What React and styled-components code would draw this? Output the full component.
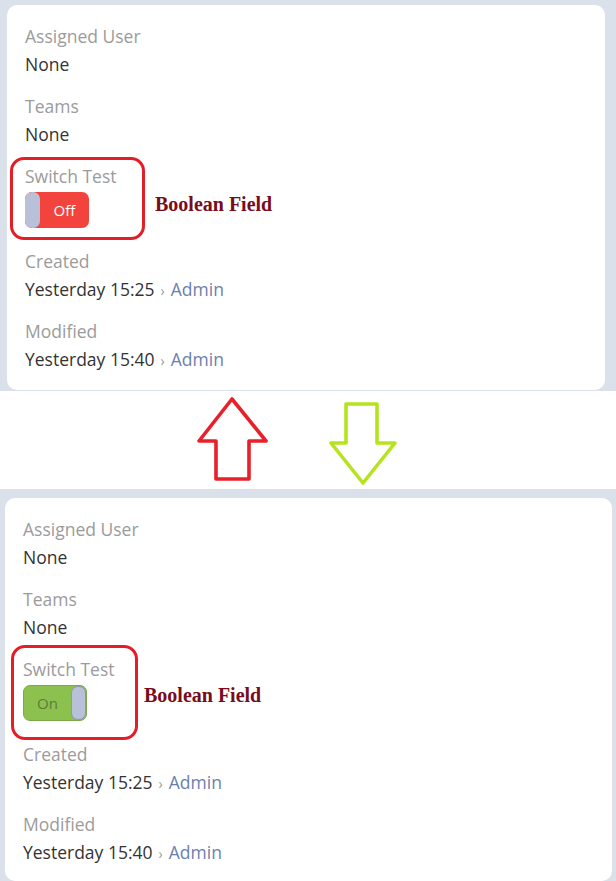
import styled, { createGlobalStyle } from "styled-components";

const GlobalStyle = createGlobalStyle`
  body {
    margin: 0;
    background: #fff;
    font-family: "Open Sans", "Liberation Sans", sans-serif;
  }
`;

// Styled Components

const Shot = styled.section`
  background: #dae1eb;
  padding: ${(p) => p.$pad};
`;

const Card = styled.div`
  background: #fff;
  border-radius: 10px;
  padding: 17px 18px ${(p) => p.$bottom}px;
`;

const Field = styled.div`
  position: relative;
  margin-bottom: 14px;

  &:last-child {
    margin-bottom: 0;
  }
`;

const Label = styled.div`
  font-size: 17.5px;
  line-height: 28px;
  color: #9b9b9b;
`;

const Value = styled.div`
  font-size: 17.5px;
  line-height: 28px;
  height: 28px;
  color: #333;
`;

const Sep = styled.span`
  color: #999;
  font-size: 14px;
  line-height: 1;
  margin: 0 6px 0 6px;
`;

const UserLink = styled.span`
  color: #6b7eb0;
`;

const SwitchWrap = styled.div`
  padding: 2px 0 5px;
`;

const Track = styled.div`
  width: 64px;
  height: 36px;
  border-radius: 7px;
  display: flex;
  flex-direction: ${(p) => (p.$on ? "row-reverse" : "row")};
  background: ${(p) => (p.$on ? "#8cc14f" : "#f2443c")};
  box-sizing: border-box;
  border: ${(p) => (p.$on ? "1px solid #7da84a" : "none")};
  overflow: hidden;
`;

const Knob = styled.div`
  width: 15px;
  height: 100%;
  border-radius: 7px;
  background: #b9c1d9;
  box-sizing: border-box;
  border: ${(p) => (p.$on ? "1px solid #8d97b8" : "none")};
`;

const State = styled.div`
  flex: 1;
  display: flex;
  align-items: center;
  justify-content: center;
  font-size: 15px;
  color: ${(p) => (p.$on ? "#5a7d38" : "#fff")};
`;

const Marker = styled.div`
  position: absolute;
  left: ${(p) => p.$left}px;
  top: ${(p) => p.$top}px;
  width: ${(p) => p.$w}px;
  height: ${(p) => p.$h}px;
  box-sizing: border-box;
  border: 3px solid #e31e27;
  border-radius: 14px;
  pointer-events: none;
`;

const Note = styled.div`
  position: absolute;
  left: ${(p) => p.$left}px;
  top: ${(p) => p.$top}px;
  font-family: "Liberation Serif", "Times New Roman", serif;
  font-weight: 700;
  font-size: 20px;
  line-height: 20px;
  color: #780c1c;
  white-space: nowrap;
`;

const Middle = styled.div`
  height: 98px;
  display: flex;
  align-items: flex-start;
  gap: 53px;
  padding-left: 193px;
`;

const Arrow = ({ points, color, width }) => (
  <svg width={width} height="98" viewBox={`0 0 ${width} 98`}>
    <polygon
      points={points}
      fill="none"
      stroke={color}
      strokeWidth="3.6"
      strokeLinejoin="round"
    />
  </svg>
);

const Switch = ({ on }) => (
  <SwitchWrap>
    <Track $on={on}>
      <Knob $on={on} />
      <State $on={on}>{on ? "On" : "Off"}</State>
    </Track>
  </SwitchWrap>
);

const Record = ({ on, bottom, marker, note }) => (
  <Card $bottom={bottom}>
    <Field>
      <Label>Assigned User</Label>
      <Value>None</Value>
    </Field>
    <Field>
      <Label>Teams</Label>
      <Value>None</Value>
    </Field>
    <Field>
      <Label>Switch Test</Label>
      <Switch on={on} />
      <Marker {...marker} />
      <Note {...note}>Boolean Field</Note>
    </Field>
    <Field>
      <Label>Created</Label>
      <Value>
        Yesterday 15:25<Sep>›</Sep>
        <UserLink>Admin</UserLink>
      </Value>
    </Field>
    <Field>
      <Label>Modified</Label>
      <Value>
        Yesterday 15:40<Sep>›</Sep>
        <UserLink>Admin</UserLink>
      </Value>
    </Field>
  </Card>
);

const App = () => (
  <>
    <GlobalStyle />
    <Shot $pad="5px 11px 1px 7px">
      <Record
        on={false}
        bottom={17}
        marker={{ $left: -15, $top: -5, $w: 135, $h: 83 }}
        note={{ $left: 130, $top: 32 }}
      />
    </Shot>
    <Middle>
      <Arrow
        width={80}
        color="#e8202a"
        points="39,8 73,50 56,50 56,88 23,88 23,50 6,50"
      />
      <Arrow
        width={76}
        color="#b5e31e"
        points="20,13 51,13 51,52 69,52 37,92 5,52 20,52"
      />
    </Middle>
    <Shot $pad="9px 4px 2px 5px">
      <Record
        on={true}
        bottom={15}
        marker={{ $left: -12, $top: -10, $w: 127, $h: 95 }}
        note={{ $left: 121, $top: 30 }}
      />
    </Shot>
  </>
);

export default App;
